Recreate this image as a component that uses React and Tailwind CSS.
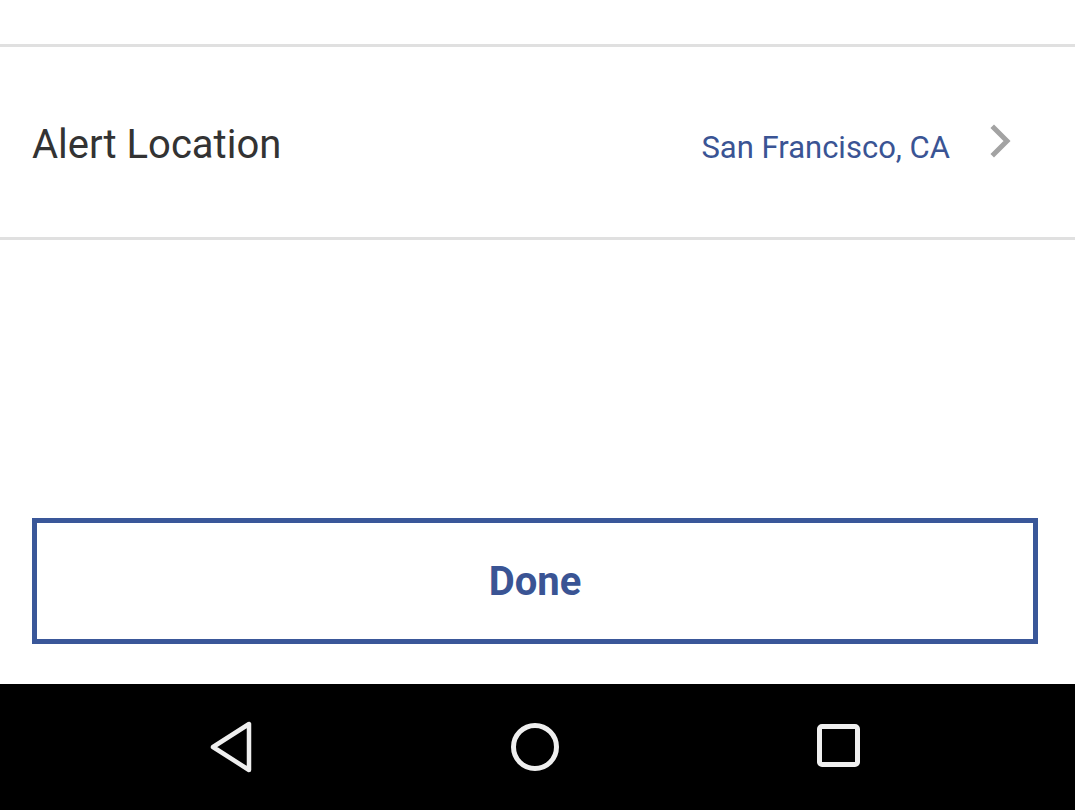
export default function App() {
  return (
    <div className="w-[1075px] h-[810px] flex flex-col bg-white overflow-hidden" style={{ fontFamily: 'Roboto, "Liberation Sans", sans-serif' }}>
      <div className="h-[47px] shrink-0 border-b-[3px] border-[#e0e0e0]" />
      <div className="h-[193px] shrink-0 border-b-[3px] border-[#e0e0e0] flex items-center pl-[32px] pr-[63px]">
        <div className="text-[40px] leading-none text-[#333333] mt-[6px]">Alert Location</div>
        <div className="ml-auto flex items-center">
          <span className="text-[31px] leading-none text-[#3a5494] mt-[10px]">San Francisco, CA</span>
          <svg className="ml-[40px] mt-[-2px]" width="22" height="34" viewBox="0 0 22 34">
            <path d="M4 4 L17 17 L4 30" fill="none" stroke="#a3a3a3" strokeWidth="5" strokeLinecap="square" strokeLinejoin="miter" />
          </svg>
        </div>
      </div>
      <div className="flex-1 flex flex-col justify-end px-[32px] pb-[40px]">
        <button className="h-[126px] w-[1006px] border-[5px] border-[#3a5799] bg-white flex items-center justify-center">
          <span className="text-[40px] font-bold text-[#3a5494] leading-none mt-[2px]">Done</span>
        </button>
      </div>
      <div className="h-[126px] shrink-0 bg-black flex items-center">
        <div className="w-full relative h-full">
          <svg className="absolute left-[205px] top-[36px]" width="50" height="54" viewBox="0 0 50 54">
            <path d="M8 27 L44 4 L44 50 Z" fill="none" stroke="#efefef" strokeWidth="4.5" strokeLinejoin="round" />
          </svg>
          <svg className="absolute left-[509px] top-[37px]" width="54" height="54" viewBox="0 0 54 54">
            <circle cx="26" cy="26" r="21.5" fill="none" stroke="#efefef" strokeWidth="5" />
          </svg>
          <svg className="absolute left-[815px] top-[39px]" width="48" height="48" viewBox="0 0 48 48">
            <rect x="4.5" y="3.5" width="38" height="38" rx="2.5" fill="none" stroke="#efefef" strokeWidth="5" />
          </svg>
        </div>
      </div>
    </div>
  );
}
